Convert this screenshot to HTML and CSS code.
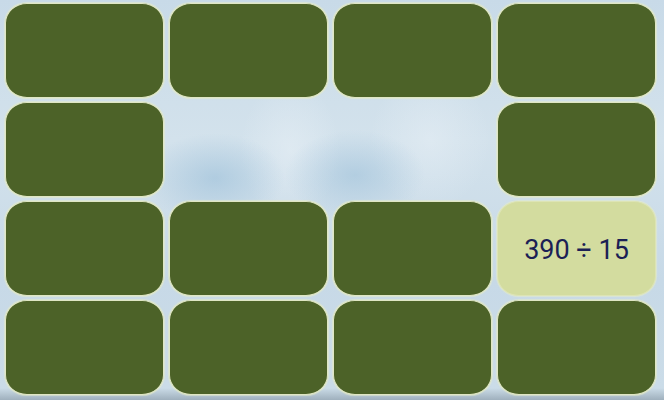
FILE: index.html
```html
<!DOCTYPE html>
<html>
<head>
<meta charset="utf-8">
<link rel="stylesheet" href="styles.css">
</head>
<body>
<div class="board">
  <div class="card"></div>
  <div class="card"></div>
  <div class="card"></div>
  <div class="card"></div>
  <div class="card"></div>
  <div class="card empty"></div>
  <div class="card empty"></div>
  <div class="card"></div>
  <div class="card"></div>
  <div class="card"></div>
  <div class="card"></div>
  <div class="card open">390 ÷ 15</div>
  <div class="card"></div>
  <div class="card"></div>
  <div class="card"></div>
  <div class="card"></div>
</div>
</body>
</html>
```
FILE: styles.css
```css
html, body {
  margin: 0;
  padding: 0;
}
body {
  width: 664px;
  height: 400px;
  overflow: hidden;
  background:
    radial-gradient(ellipse 70px 45px at 215px 178px, rgba(150,188,215,0.55), transparent),
    radial-gradient(ellipse 70px 45px at 355px 175px, rgba(150,188,215,0.5), transparent),
    radial-gradient(ellipse 50px 70px at 290px 150px, rgba(232,240,246,0.55), transparent),
    radial-gradient(ellipse 60px 70px at 430px 140px, rgba(232,240,246,0.5), transparent),
    linear-gradient(180deg, #c8dae8 0%, #d3e2ec 35%, #c7d9e7 70%, #cbdce8 97%, #9fb0bd 100%);
  font-family: Roboto, "Liberation Sans", sans-serif;
}
.board {
  box-sizing: border-box;
  height: 400px;
  padding: 3px 8px 5px 5px;
  display: grid;
  grid-template-columns: repeat(4, 159px);
  grid-template-rows: repeat(4, 95px);
  column-gap: 5px;
  row-gap: 4px;
}
.card {
  box-sizing: border-box;
  background: #4c6228;
  border: 1px solid #dfe6c4;
  border-radius: 22px / 20px;
  box-shadow: 0 0 1px 1px rgba(230,236,200,0.6);
}
.card.empty {
  visibility: hidden;
}
.card.open {
  background: #d3dc9f;
  border-color: #dde4b4;
  display: flex;
  align-items: center;
  justify-content: center;
  color: #1c1f55;
  font-size: 27px;
  padding-top: 2px;
}
```
